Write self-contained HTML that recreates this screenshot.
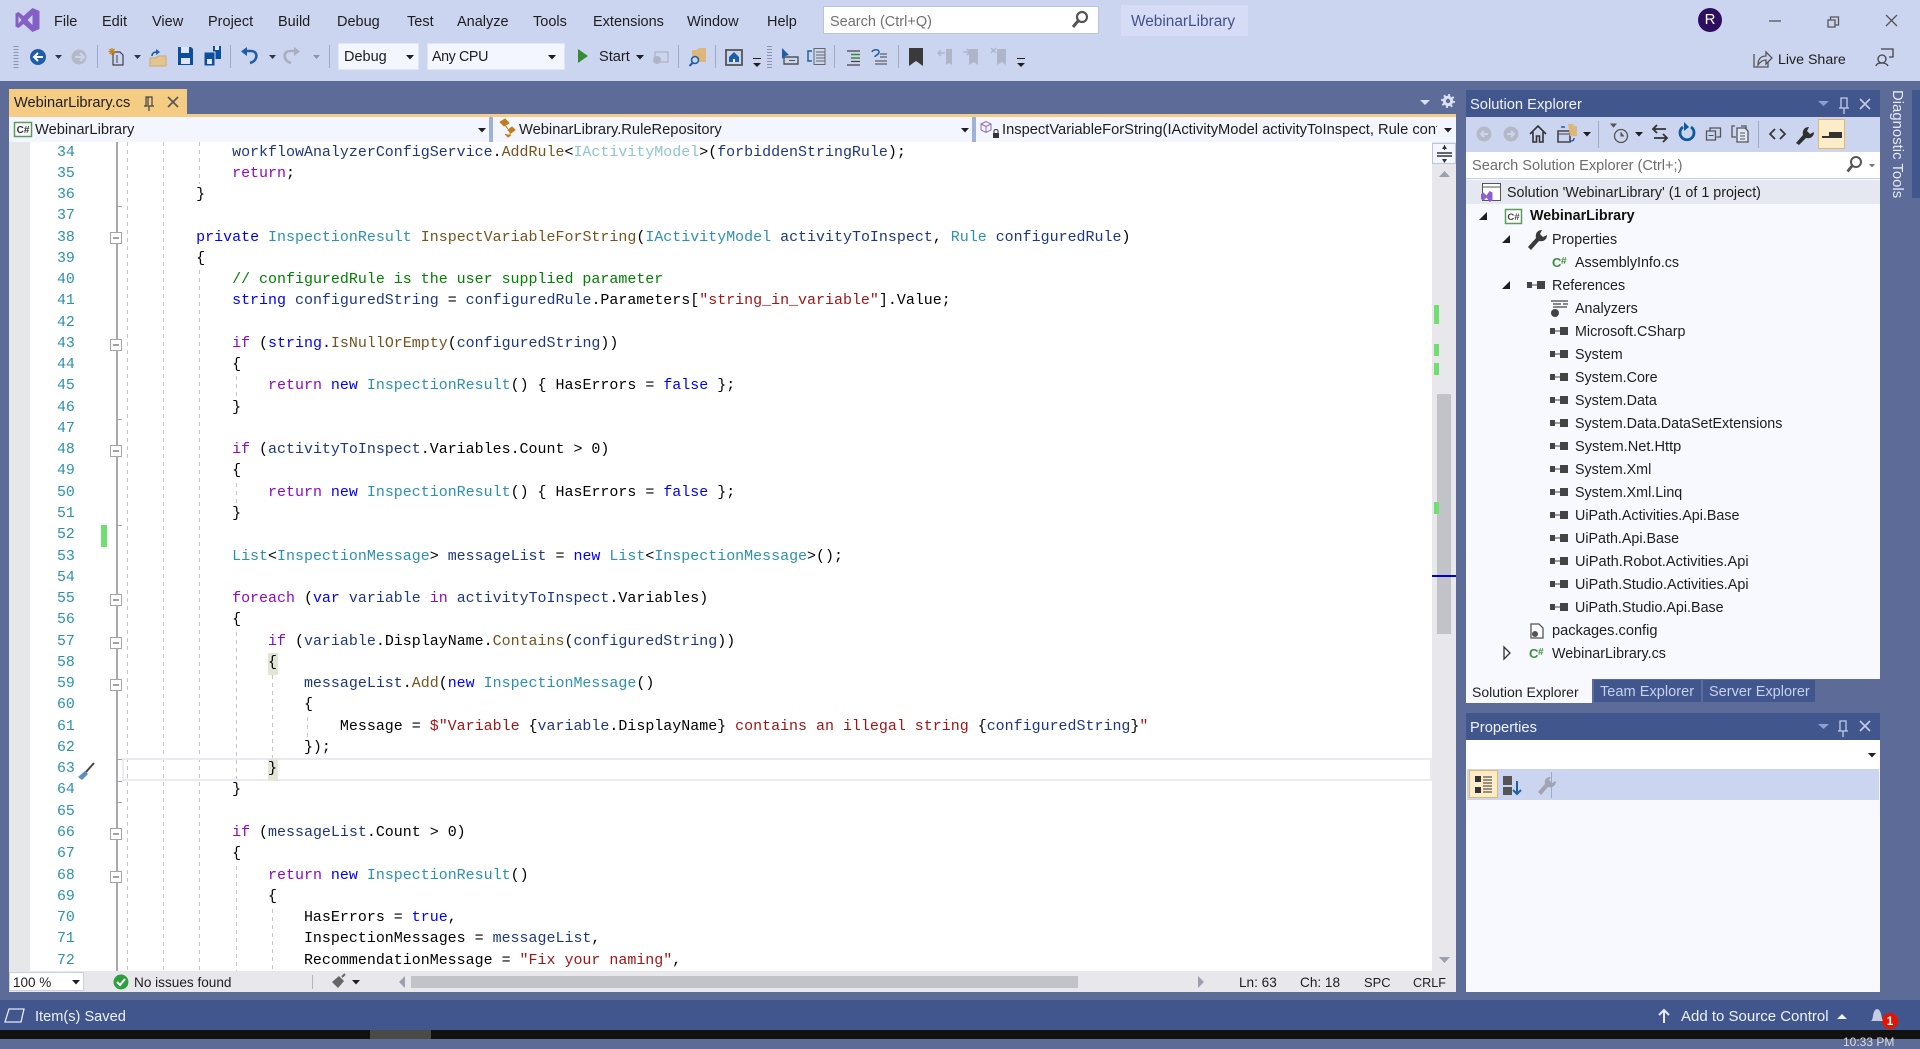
<!DOCTYPE html>
<html><head><meta charset="utf-8"><title>WebinarLibrary</title>
<style>
*{box-sizing:border-box}
html,body{margin:0;padding:0;width:1920px;height:1039px;overflow:hidden;background:#5d6b99;font-family:"Liberation Sans",sans-serif}
.b{position:absolute}
.t{position:absolute;white-space:nowrap;font-size:14.3px;line-height:20px;color:#1e1e1e;margin-top:1px}
.m{font-size:14.5px;top:11px}
#code{position:absolute;left:124.300px;top:142.500px;font:14.97px/21.27px "Liberation Mono",monospace;color:#000;white-space:pre}
#nums{position:absolute;left:57px;top:142.500px;font:14.88px/21.27px "Liberation Mono",monospace;color:#2b91af;white-space:pre}
#code div,#nums div{height:21.27px}
.g{position:absolute;width:1px;background:repeating-linear-gradient(to bottom,#c6c6c6 0,#c6c6c6 4px,transparent 4px,transparent 8px)}
.k{color:#0000ff}.c{color:#8f08c4}.y{color:#2b91af}.l{color:#1f377f}.f{color:#74531f}.s{color:#a31515}.o{color:#008000}.q{color:#8fc3d6}
.h{background:#e2e6d6}
</style></head><body>

<!-- title + toolbar -->
<div class="b" style="left:0;top:0;width:1920px;height:81px;background:#ccd5f0"></div>
<div class="t m" style="left:54px">File</div>
<div class="t m" style="left:102px">Edit</div>
<div class="t m" style="left:152px">View</div>
<div class="t m" style="left:208px">Project</div>
<div class="t m" style="left:278px">Build</div>
<div class="t m" style="left:337px">Debug</div>
<div class="t m" style="left:407px">Test</div>
<div class="t m" style="left:457px">Analyze</div>
<div class="t m" style="left:533px">Tools</div>
<div class="t m" style="left:593px">Extensions</div>
<div class="t m" style="left:687px">Window</div>
<div class="t m" style="left:767px">Help</div>
<div class="b" style="left:823px;top:6px;width:276px;height:28px;background:#fff;border:1px solid #b9c3dd"></div>
<div class="t m" style="left:830px;color:#717171">Search (Ctrl+Q)</div>
<div class="b" style="left:1121px;top:5px;width:127px;height:31px;background:#d6dcf6"></div>
<div class="t" style="left:1131px;top:11px;color:#44528c;font-size:15.4px">WebinarLibrary</div>

<div class="b" style="left:338px;top:43px;width:81px;height:27px;background:#f3f6fe;border:1px solid #dfe6f8"></div>
<div class="t" style="left:344px;top:46px;font-size:14.5px">Debug</div>
<div class="b" style="left:427px;top:43px;width:138px;height:27px;background:#f3f6fe;border:1px solid #dfe6f8"></div>
<div class="t" style="left:432px;top:46px;letter-spacing:-.4px">Any CPU</div>
<div class="t" style="left:599px;top:46px;font-size:14.6px">Start</div>
<div class="t" style="left:1778px;top:49px;font-size:14.2px">Live Share</div>
<div class="b" style="left:1698px;top:8px;width:24px;height:24px;border-radius:50%;background:#2e0f5f"></div>
<div class="t" style="left:1698px;top:9px;width:24px;text-align:center;color:#fff;font-size:15px">R</div>

<!-- document well -->
<div class="b" style="left:9px;top:89px;width:178px;height:26px;background:#f5cc84"></div>
<div class="t" style="left:14px;top:92px;font-size:14.6px">WebinarLibrary.cs</div>
<div class="b" style="left:9px;top:114px;width:1447px;height:3px;background:#f5cc84"></div>

<!-- nav bar -->
<div class="b" style="left:9px;top:117px;width:1447px;height:25px;background:#f3f6fe"></div>
<div class="b" style="left:489px;top:117px;width:4px;height:25px;background:#9fb1d6"></div>
<div class="b" style="left:972px;top:117px;width:4px;height:25px;background:#9fb1d6"></div>
<div class="t" style="left:35px;top:119px;font-size:14.7px">WebinarLibrary</div>
<div class="t" style="left:519px;top:119px;font-size:14.7px">WebinarLibrary.RuleRepository</div>
<div class="b" style="left:1002px;top:117px;width:435px;height:25px;overflow:hidden"><div class="t" style="left:0;top:2px;font-size:14.7px">InspectVariableForString(IActivityModel activityToInspect, Rule configuredRule)</div></div>

<!-- editor -->
<div class="b" style="left:9px;top:142px;width:1447px;height:830px;background:#fff;overflow:hidden"></div>
<div class="b" style="left:9px;top:142px;width:21px;height:830px;background:#e6e7e8"></div>
<div class="b" style="left:101px;top:525px;width:6px;height:22px;background:#6fe06f"></div>
<div class="b" style="left:115.500px;top:142px;width:2px;height:830px;background:#a9a9a9"></div>

<div class="g" style="left:127px;top:142px;height:830px"></div>
<div class="g" style="left:163px;top:142px;height:830px"></div>
<div class="g" style="left:199px;top:142px;height:42px"></div>
<div class="g" style="left:199px;top:270px;height:702px"></div>
<div class="g" style="left:236px;top:376px;height:21px"></div>
<div class="g" style="left:236px;top:483px;height:21px"></div>
<div class="g" style="left:236px;top:632px;height:149px"></div>
<div class="g" style="left:236px;top:866px;height:106px"></div>
<div class="g" style="left:272px;top:675px;height:85px"></div>
<div class="g" style="left:272px;top:909px;height:63px"></div>
<div class="g" style="left:307px;top:717px;height:21px"></div>

<div class="b" style="left:122px;top:758px;width:1310px;height:23px;border:2px solid #eaeaf2"></div>
<div class="b h" style="left:268px;top:653px;width:9.500px;height:22px"></div>
<div class="b h" style="left:268px;top:759px;width:9.500px;height:22px"></div>

<div id="nums"><div>34</div><div>35</div><div>36</div><div>37</div><div>38</div><div>39</div><div>40</div><div>41</div><div>42</div><div>43</div><div>44</div><div>45</div><div>46</div><div>47</div><div>48</div><div>49</div><div>50</div><div>51</div><div>52</div><div>53</div><div>54</div><div>55</div><div>56</div><div>57</div><div>58</div><div>59</div><div>60</div><div>61</div><div>62</div><div>63</div><div>64</div><div>65</div><div>66</div><div>67</div><div>68</div><div>69</div><div>70</div><div>71</div><div>72</div></div>

<div id="code"><div>            <span class="l">workflowAnalyzerConfigService</span>.<span class="f">AddRule</span>&lt;<span class="q">IActivityModel</span>&gt;(<span class="l">forbiddenStringRule</span>);</div><div>            <span class="c">return</span>;</div><div>        }</div><div> </div><div>        <span class="k">private</span> <span class="y">InspectionResult</span> <span class="f">InspectVariableForString</span>(<span class="y">IActivityModel</span> <span class="l">activityToInspect</span>, <span class="y">Rule</span> <span class="l">configuredRule</span>)</div><div>        {</div><div>            <span class="o">// configuredRule is the user supplied parameter</span></div><div>            <span class="k">string</span> <span class="l">configuredString</span> = <span class="l">configuredRule</span>.Parameters[<span class="s">"string_in_variable"</span>].Value;</div><div> </div><div>            <span class="c">if</span> (<span class="k">string</span>.<span class="f">IsNullOrEmpty</span>(<span class="l">configuredString</span>))</div><div>            {</div><div>                <span class="c">return</span> <span class="k">new</span> <span class="y">InspectionResult</span>() { HasErrors = <span class="k">false</span> };</div><div>            }</div><div> </div><div>            <span class="c">if</span> (<span class="l">activityToInspect</span>.Variables.Count &gt; 0)</div><div>            {</div><div>                <span class="c">return</span> <span class="k">new</span> <span class="y">InspectionResult</span>() { HasErrors = <span class="k">false</span> };</div><div>            }</div><div> </div><div>            <span class="y">List</span>&lt;<span class="y">InspectionMessage</span>&gt; <span class="l">messageList</span> = <span class="k">new</span> <span class="y">List</span>&lt;<span class="y">InspectionMessage</span>&gt;();</div><div> </div><div>            <span class="c">foreach</span> (<span class="k">var</span> <span class="l">variable</span> <span class="c">in</span> <span class="l">activityToInspect</span>.Variables)</div><div>            {</div><div>                <span class="c">if</span> (<span class="l">variable</span>.DisplayName.<span class="f">Contains</span>(<span class="l">configuredString</span>))</div><div>                {</div><div>                    <span class="l">messageList</span>.<span class="f">Add</span>(<span class="k">new</span> <span class="y">InspectionMessage</span>()</div><div>                    {</div><div>                        Message = <span class="s">$"Variable </span>{<span class="l">variable</span>.DisplayName}<span class="s"> contains an illegal string </span>{<span class="l">configuredString</span>}<span class="s">"</span></div><div>                    });</div><div>                }</div><div>            }</div><div> </div><div>            <span class="c">if</span> (<span class="l">messageList</span>.Count &gt; 0)</div><div>            {</div><div>                <span class="c">return</span> <span class="k">new</span> <span class="y">InspectionResult</span>()</div><div>                {</div><div>                    HasErrors = <span class="k">true</span>,</div><div>                    InspectionMessages = <span class="l">messageList</span>,</div><div>                    RecommendationMessage = <span class="s">"Fix your naming"</span>,</div></div>

<!-- v-scrollbar -->
<div class="b" style="left:1432px;top:142px;width:24px;height:830px;background:#e8e8ec"></div>
<div class="b" style="left:1432px;top:143px;width:24px;height:21px;background:#f3f6fe;border:1px solid #b9c6e2"></div>
<div class="b" style="left:1437px;top:394px;width:14px;height:240px;background:#c2c3c9"></div>
<div class="b" style="left:1434px;top:305px;width:5px;height:19px;background:#6fe06f"></div>
<div class="b" style="left:1434px;top:344px;width:5px;height:12px;background:#6fe06f"></div>
<div class="b" style="left:1434px;top:363px;width:5px;height:12px;background:#6fe06f"></div>
<div class="b" style="left:1434px;top:502px;width:5px;height:12px;background:#6fe06f"></div>
<div class="b" style="left:1432px;top:575px;width:24px;height:2px;background:#0000cd"></div>

<!-- editor status -->
<div class="b" style="left:9px;top:971px;width:1447px;height:21px;background:#e8e8ec"></div>
<div class="b" style="left:9px;top:972px;width:75px;height:19px;background:#fff;border:1px solid #c6d0ea"></div>
<div class="t" style="left:13px;top:972px;font-size:13.5px">100 %</div>
<div class="t" style="left:134px;top:972px;font-size:13.6px">No issues found</div>
<div class="b" style="left:312px;top:975px;width:1px;height:14px;background:#b4b4bc"></div>
<div class="b" style="left:411px;top:976px;width:667px;height:12px;background:#c2c3c9"></div>
<div class="t" style="left:1239px;top:972px;font-size:13.6px">Ln: 63</div>
<div class="t" style="left:1300px;top:972px;font-size:13.6px">Ch: 18</div>
<div class="t" style="left:1364px;top:972px;font-size:12.9px">SPC</div>
<div class="t" style="left:1413px;top:972px;font-size:12.6px">CRLF</div>

<!-- solution explorer -->
<div class="b" style="left:1466px;top:90px;width:414px;height:27px;background:#40568d"></div>
<div class="t" style="left:1470px;top:94px;color:#f0f3fb;font-size:14.7px">Solution Explorer</div>
<div class="b" style="left:1466px;top:117px;width:414px;height:35px;background:#ccd5f0"></div>
<div class="b" style="left:1466px;top:152px;width:414px;height:27px;background:#fff;border-bottom:1px solid #c6d0ea"></div>
<div class="t" style="left:1472px;top:155px;color:#6d6d6d;font-size:14.6px">Search Solution Explorer (Ctrl+;)</div>
<div class="b" style="left:1466px;top:179px;width:414px;height:500px;background:#f8f9fe"></div>
<div class="b" style="left:1466px;top:180px;width:414px;height:24px;background:#e6e8f1"></div>
<div class="t" style="left:1507px;top:182px">Solution 'WebinarLibrary' (1 of 1 project)</div>
<div class="t" style="left:1530px;top:205px;font-weight:bold;color:#111">WebinarLibrary</div>
<div class="t" style="left:1552px;top:229px">Properties</div>
<div class="t" style="left:1575px;top:252px">AssemblyInfo.cs</div>
<div class="t" style="left:1552px;top:275px">References</div>
<div class="t" style="left:1575px;top:298px">Analyzers</div>
<div class="t" style="left:1575px;top:321px">Microsoft.CSharp</div>
<div class="t" style="left:1575px;top:344px">System</div>
<div class="t" style="left:1575px;top:367px">System.Core</div>
<div class="t" style="left:1575px;top:390px">System.Data</div>
<div class="t" style="left:1575px;top:413px">System.Data.DataSetExtensions</div>
<div class="t" style="left:1575px;top:436px;font-size:14.6px">System.Net.Http</div>
<div class="t" style="left:1575px;top:459px">System.Xml</div>
<div class="t" style="left:1575px;top:482px">System.Xml.Linq</div>
<div class="t" style="left:1575px;top:505px">UiPath.Activities.Api.Base</div>
<div class="t" style="left:1575px;top:528px">UiPath.Api.Base</div>
<div class="t" style="left:1575px;top:551px;font-size:14.6px">UiPath.Robot.Activities.Api</div>
<div class="t" style="left:1575px;top:574px;font-size:14.4px">UiPath.Studio.Activities.Api</div>
<div class="t" style="left:1575px;top:597px">UiPath.Studio.Api.Base</div>
<div class="t" style="left:1552px;top:620px;font-size:14.6px">packages.config</div>
<div class="t" style="left:1552px;top:643px">WebinarLibrary.cs</div>

<div class="b" style="left:1466px;top:679px;width:126px;height:24px;background:#f8f9fe"></div>
<div class="t" style="left:1472px;top:681px;font-size:14px">Solution Explorer</div>
<div class="b" style="left:1594px;top:680px;width:107px;height:22px;background:#40568d"></div>
<div class="t" style="left:1600px;top:681px;font-size:14.6px;color:#c7d1ee">Team Explorer</div>
<div class="b" style="left:1703px;top:680px;width:112px;height:22px;background:#40568d"></div>
<div class="t" style="left:1709px;top:681px;font-size:14.5px;color:#c7d1ee">Server Explorer</div>

<!-- properties -->
<div class="b" style="left:1466px;top:713px;width:414px;height:27px;background:#40568d"></div>
<div class="t" style="left:1470px;top:717px;color:#f0f3fb;font-size:14.7px">Properties</div>
<div class="b" style="left:1466px;top:740px;width:414px;height:252px;background:#f8f9fe"></div>
<div class="b" style="left:1466px;top:740px;width:414px;height:29px;background:#fff"></div>
<div class="b" style="left:1467px;top:769px;width:412px;height:31px;background:#ccd5f0"></div>

<!-- diagnostic -->
<div class="t" style="left:1887px;top:89px;font-size:14.9px;color:#e4e9f7;writing-mode:vertical-rl;width:20px;line-height:20px">Diagnostic Tools</div>
<div class="b" style="left:1912px;top:90px;width:8px;height:108px;background:#40568d"></div>

<!-- status bar -->
<div class="b" style="left:0;top:1000px;width:1920px;height:30px;background:#40568d"></div>
<div class="t" style="left:35px;top:1006px;color:#eef1fa;font-size:14.6px">Item(s) Saved</div>
<div class="t" style="left:1681px;top:1006px;color:#eef1fa;font-size:15px">Add to Source Control</div>
<div class="b" style="left:0;top:1030px;width:1920px;height:9px;background:#11110f"></div>
<div class="b" style="left:370px;top:1030px;width:61px;height:9px;background:#4a4a47"></div>
<div class="t" style="left:1843px;top:1035px;color:#ddd;font-size:12px;line-height:12px">10:33 PM</div>
<div class="b" style="left:1882px;top:1013px;width:16px;height:16px;border-radius:50%;background:#e51400"></div>
<div class="t" style="left:1882px;top:1010px;width:16px;text-align:center;font-size:12px;font-weight:bold;color:#fff">1</div>

<svg class="b" style="left:0;top:0" width="1920" height="1039" viewBox="0 0 1920 1039">
<!-- VS logo -->
<path fill="#865fc5" fill-rule="evenodd" d="M32.500 8l7 3v18l-7 3-9-8-5 4-3-1.500v-13l3-1.500 5 4zM32.500 15l-5 5 5 5zM18.500 16.500v7l3-3.500z"/>
<!-- grip -->
<path stroke="#8a94b0" stroke-width="5" stroke-dasharray="1 2" fill="none" d="M16 46v22"/>
<path stroke="#8a94b0" stroke-width="5" stroke-dasharray="1 2" fill="none" d="M769.500 46v22"/>
<!-- back/forward -->
<circle cx="38" cy="57" r="8" fill="#1e5ea8"/><path d="M43 57h-8m3-4l-4 4 4 4" stroke="#fff" stroke-width="2" fill="none"/>
<path d="M55 55h7l-3.500 4zM134 55h7l-3.500 4zM269 55h7l-3.500 4z" fill="#2a3350"/>
<circle cx="79" cy="57" r="7.500" fill="#b5b9c6"/><path d="M75 57h8m-3-4l4 4-4 4" stroke="#ccd5f0" stroke-width="2" fill="none"/>
<path d="M313 55h7l-3.500 4z" fill="#8d93a8"/>
<!-- separators -->
<path stroke="#9eaac8" d="M97.500 45v23M230.500 45v23M329.500 45v23M678.500 45v23M715.500 45v23M834.500 45v23M898.500 45v23M1598.500 121v27M1758.500 121v27M1551.500 772v26"/>
<!-- new project -->
<path d="M113 52h7l3 3v10h-10z" fill="none" stroke="#444" stroke-width="1.200"/><path d="M117 55v8" stroke="#444"/><path d="M112 48v7M108.500 51.500h7M109.500 49l5 5M114.500 49l-5 5" stroke="#c7851b" stroke-width="1.300"/>
<!-- open -->
<path d="M150 58h6l2-2h8v10h-16z" fill="#e3c590" stroke="#d0a868"/><path d="M152 56c0-3 2-4 5-4" stroke="#1e5ea8" stroke-width="1.600" fill="none"/><path d="M156 49l4 3-4 3z" fill="#1e5ea8"/>
<!-- save -->
<path d="M178 47h13l2 2v16h-15z" fill="#0c4e9e"/><rect x="181" y="47" width="8" height="6" fill="#dfe6f8"/><rect x="181" y="58" width="9" height="6" fill="#dfe6f8"/>
<path d="M213 46h8v13h-8z" fill="#0c4e9e"/><rect x="215" y="46" width="4" height="4" fill="#dfe6f8"/><path d="M204 52h11v14h-11z" fill="#0c4e9e" stroke="#ccd5f0"/><rect x="207" y="59" width="5" height="5" fill="#dfe6f8"/>
<!-- undo/redo -->
<path d="M244 51h7c5 0 6 4 5 7s-3 4-6 5" stroke="#1e5ea8" stroke-width="2.600" fill="none"/><path d="M247 47v9l-6-4.500z" fill="#1e5ea8"/>
<path d="M297 51h-7c-5 0-6 4-5 7s3 4 6 5" stroke="#a9aebd" stroke-width="2.600" fill="none"/><path d="M294 47v9l6-4.500z" fill="#a9aebd"/>
<!-- dropdown arrows -->
<path d="M406 55h8l-4 4.500zM548 55h8l-4 4.500zM636 55h8l-4 4.500z" fill="#1e1e1e"/>
<!-- play -->
<path d="M578 49l10 7-10 7z" fill="#388a34"/>
<path d="M655 52h13v10h-13z" fill="none" stroke="#b0b5c4" stroke-width="1.300"/><circle cx="657" cy="60" r="4" fill="#b0b5c4"/>
<!-- folder search -->
<path d="M692 50h5l2-2h7v14h-14z" fill="#dcb67a"/><circle cx="695" cy="60" r="3.500" fill="#ccd5f0" stroke="#1e5ea8" stroke-width="1.600"/><path d="M692.500 63l-3 3" stroke="#1e5ea8" stroke-width="2"/>
<!-- home box -->
<rect x="726" y="50" width="16" height="15" fill="#ccd5f0" stroke="#555" stroke-width="1.800"/><path d="M734 52l5 5v5h-10v-5z" fill="#1e5ea8"/><rect x="733" y="59" width="2" height="3" fill="#fff"/>
<path d="M753 58.500h8" stroke="#1e1e1e"/><path d="M753 63h8l-4 4z" fill="#1e1e1e"/>
<path d="M1017 58.500h8" stroke="#1e1e1e"/><path d="M1017 63h8l-4 4z" fill="#1e1e1e"/>
<!-- step icons -->
<path d="M782 48l0 11 3-3 4-1z" fill="#1e5ea8"/><path d="M784 57h14v7h-14z" fill="none" stroke="#555" stroke-width="1.400"/><path d="M789 60.500h6" stroke="#555"/>
<path d="M812 51h-4v10h4" fill="none" stroke="#1e5ea8" stroke-width="1.500"/><path d="M814 48.500h11v16h-11z" fill="none" stroke="#666"/><path d="M816 52h9M816 55h9M816 58h9M816 61h9" stroke="#666"/>
<path d="M847 51h13M851 54.500h9M851 58h9M851 61.500h9M847 65h13" stroke="#444" stroke-width="1.200"/><path d="M851 54.500h9M851 58h9" stroke="#388a34" stroke-width="1.200"/>
<path d="M872 52c1-3 7-3 7 0s-4 3-4 5" fill="none" stroke="#1e5ea8" stroke-width="1.600"/><path d="M880 54h7M880 57h7M875 61h12M875 64h12" stroke="#444"/>
<!-- bookmarks -->
<path d="M909 48h14v18l-7-5-7 5z" fill="#3a3a3a"/>
<path d="M946 49h6v16l-3-2-3 2z" fill="#aeb5c9"/><path d="M945 53h-7m3-3l-3 3 3 3" stroke="#aeb5c9" stroke-width="1.500" fill="none"/>
<path d="M969 49h9v16l-4-3-5 3z" fill="#aeb5c9"/><path d="M963 52h7m-3-3l3 3-3 3" stroke="#aeb5c9" stroke-width="1.500" fill="none"/>
<path d="M997 49h9v16l-4-3-5 3z" fill="#aeb5c9"/><path d="M991 48l5 5m0-5l-5 5" stroke="#aeb5c9" stroke-width="1.500"/>
<!-- search mag -->
<circle cx="1082" cy="17" r="5" fill="none" stroke="#555" stroke-width="2.200"/><path d="M1078 21l-5 6" stroke="#555" stroke-width="3"/>
<!-- window controls -->
<path d="M1769 21h12" stroke="#555" stroke-width="1.300"/>
<path d="M1828 23h7v7h-7zM1830.500 23v-3h8v8h-3" fill="none" stroke="#555" stroke-width="1.300" transform="translate(0 -3)"/>
<path d="M1886 15l11 11m0-11l-11 11" stroke="#555" stroke-width="1.300"/>
<!-- live share -->
<path d="M1754 54v13h14v-5" fill="none" stroke="#555" stroke-width="1.300"/><path d="M1758 65c0-6 3-9 8-9v-4l6 6-6 6v-4c-3 0-6 2-8 5z" fill="none" stroke="#555" stroke-width="1.300"/>
<!-- feedback -->
<circle cx="1882" cy="59" r="4" fill="none" stroke="#444" stroke-width="1.300"/><path d="M1876 66c1-3 3-3 6-3s5 1 6 3M1881 49h12v8h-4" fill="none" stroke="#444" stroke-width="1.300"/>
<!-- tab pin / close -->
<path d="M146 97h6v9h-6zM144 106h10M149 106v5M148 97v8" stroke="#444" stroke-width="1.200" fill="none"/>
<path d="M168 97l10 10m0-10l-10 10" stroke="#555" stroke-width="1.600"/>
<!-- well right -->
<path d="M1420 100h10l-5 5z" fill="#dbe2f5"/>
<circle cx="1448" cy="101" r="3.700" fill="none" stroke="#dbe2f5" stroke-width="3"/><circle cx="1448" cy="101" r="6" fill="none" stroke="#dbe2f5" stroke-width="2" stroke-dasharray="2 2.700"/>
<!-- nav icons -->
<rect x="14.500" y="122.500" width="17" height="14" fill="#fff" stroke="#5a9a5a" stroke-width="1.500"/>
<text x="23" y="133" font-family="Liberation Sans" font-size="10" font-weight="bold" text-anchor="middle" fill="#333">C#</text>
<path d="M500 122l5-3 4 4-5 3zM508 130l4-3 3 3-4 3zM505 134l3 3 3-2" fill="#c27d1a" stroke="#c27d1a"/><path d="M505 125l3 4M510 130v6" stroke="#c27d1a"/>
<path d="M478 128h8l-4 4.500zM961 128h8l-4 4.500zM1444 128h8l-4 4.500z" fill="#1e1e1e"/>
<path d="M981 124l5-2.500 5 2.500v6l-5 2.500-5-2.500zM981 124l5 2.500 5-2.500M986 126.500v6" fill="none" stroke="#8f6ab8"/>
<rect x="993" y="133" width="6" height="5" fill="#333"/><path d="M994 133v-2c0-2 4-2 4 0v2" fill="none" stroke="#333"/>
<!-- split -->
<path d="M1437 153h15" stroke="#333" stroke-width="1.500"/><path d="M1437 156h15" stroke="#333" stroke-width="1.500"/><path d="M1444.500 145v5M1444.500 160v-1" stroke="#333"/><path d="M1442 149l2.500-4 2.500 4zM1442 159l2.500 4 2.500-4z" fill="#333"/>
<path d="M1439 177l5.500-6 5.500 6z" fill="#9c9fae"/>
<path d="M1439 957l5.500 6 5.500-6z" fill="#9c9fae"/>
<!-- collapse boxes -->
<g fill="#fff" stroke="#a5a5a5"><rect x="110.500" y="232.500" width="11" height="11"/><rect x="110.500" y="339.500" width="11" height="11"/><rect x="110.500" y="445.500" width="11" height="11"/><rect x="110.500" y="594.500" width="11" height="11"/><rect x="110.500" y="637.500" width="11" height="11"/><rect x="110.500" y="679.500" width="11" height="11"/><rect x="110.500" y="828.500" width="11" height="11"/><rect x="110.500" y="871.500" width="11" height="11"/></g>
<path stroke="#444" d="M113 238h6M113 345h6M113 451h6M113 600h6M113 643h6M113 685h6M113 834h6M113 877h6"/>
<path stroke="#a5a5a5" d="M116 206.500h6M116 419.500h6M116 525.500h6M116 759.500h6M116 781.500h6M116 802.500h6"/>
<!-- screwdriver -->
<path d="M78 777l7-6 3 3-6 6z" fill="#5b90c7"/><path d="M86 772l8-9" stroke="#444" stroke-width="2"/>
<!-- status: check, brush, arrows -->
<circle cx="121" cy="982" r="7.500" fill="#2f9e3f"/><path d="M117 982l3 3 5-6" stroke="#fff" stroke-width="2" fill="none"/>
<path d="M332 982l7-6 5 5-6 7z" fill="#666"/><path d="M342 977l3-3" stroke="#666" stroke-width="2"/>
<path d="M352 980h8l-4 4.500z" fill="#1e1e1e"/>
<path d="M72 980h8l-4 4.500z" fill="#1e1e1e"/>
<path d="M405 976v12l-6-6z" fill="#9c9fae"/><path d="M1198 976v12l6-6z" fill="#9c9fae"/>
<!-- Item saved -->
<path d="M9 1012h15l-3 13H5z" fill="none" stroke="#e6eaf6" stroke-width="1.300" transform="translate(0 -3)"/>
<!-- source control -->
<path d="M1664 1023v-13m-5 5l5-5 5 5" stroke="#e6eaf6" stroke-width="2" fill="none"/>
<path d="M1837 1019l5-5 5 5z" fill="#eef1fa"/>
<path d="M1871 1021c3-2 1-11 6-12 5 1 4 9 6 12z" fill="#c6cde2"/>
<!-- SE header icons -->
<path d="M1818 101h11l-5.500 5z" fill="#8ea0cd"/><path d="M1841 98h6v10h-6zM1839 108h10M1844 108v6" stroke="#c3cde6" stroke-width="1.300" fill="none"/><path d="M1860 99l10 10m0-10l-10 10" stroke="#c3cde6" stroke-width="1.600"/>
<path d="M1818 724h11l-5.500 5z" fill="#8ea0cd"/><path d="M1840 721h6v10h-6zM1838 731h10M1843 731v6" stroke="#c3cde6" stroke-width="1.300" fill="none"/><path d="M1860 721l10 10m0-10l-10 10" stroke="#c3cde6" stroke-width="1.600"/>
<!-- SE toolbar -->
<circle cx="1484" cy="134" r="7.500" fill="#b5b9c6"/><path d="M1488 134h-7m3-3l-3 3 3 3" stroke="#ccd5f0" stroke-width="2" fill="none"/>
<circle cx="1511" cy="134" r="7.500" fill="#b5b9c6"/><path d="M1507 134h7m-3-3l3 3-3 3" stroke="#ccd5f0" stroke-width="2" fill="none"/>
<path d="M1530 134l8-8 8 8M1533 132v10h3.500v-6h3v6h3.500v-10" stroke="#333" stroke-width="1.600" fill="none"/>
<path d="M1558 131h12v11h-12z" fill="none" stroke="#444" stroke-width="1.600"/><path d="M1558 134h12" stroke="#444"/><path d="M1568 124h5l1 2h3v10h-7z" fill="#dcb67a"/><path d="M1561 127h4" stroke="#1e5ea8" stroke-width="1.500"/><path d="M1574 138c0 3-2 3-4 3" stroke="#1e5ea8" stroke-width="1.500" fill="none"/>
<path d="M1583 132h8l-4 4.500zM1635 132h8l-4 4.500z" fill="#1e1e1e"/>
<circle cx="1621" cy="136" r="6.500" fill="none" stroke="#555" stroke-width="1.300"/><path d="M1621 132v4h3M1611 124h5l-2.500 3z" stroke="#555" fill="#555"/>
<path d="M1653 129h13m-9-4l-4 4 4 4M1667 138h-13m9-4l4 4-4 4" stroke="#333" stroke-width="1.800" fill="none"/>
<path d="M1691 127a7 7 0 1 1-8 0" stroke="#0e5a9e" stroke-width="2.800" fill="none"/><path d="M1684 122v9l5-4z" fill="#0e5a9e"/>
<path d="M1706.500 131h9v9h-9z" fill="none" stroke="#555" stroke-width="1.300"/><path d="M1710 131v-3h10.500v9h-4" fill="none" stroke="#555" stroke-width="1.300"/><path d="M1708.500 135.500h5" stroke="#1e5ea8"/>
<path d="M1735 126h-3v11h4M1746 129v-3h-5" fill="none" stroke="#555" stroke-width="1.300"/><path d="M1737 128h8l3 3v11h-11z" fill="#dfe6f8" stroke="#555" stroke-width="1.300"/><path d="M1740 133h5M1740 136h5M1740 139h5" stroke="#555"/>
<path d="M1775 129l-5 5 5 5M1780 129l5 5-5 5" stroke="#333" stroke-width="1.700" fill="none"/>
<path d="M1796 143l7-8c-1-4 1-8 6-8l-2 4 3 3 4-2c0 5-4 7-8 6l-7 7z" fill="#2f2f2f"/>
<rect x="1818.500" y="119.500" width="26" height="29" fill="#fcecc9" stroke="#e5b867"/>
<path d="M1822 137h20" stroke="#333" stroke-width="2"/><rect x="1829" y="132" width="13" height="5" fill="#333"/>
<!-- SE search mag -->
<circle cx="1856" cy="162" r="5" fill="none" stroke="#555" stroke-width="2"/><path d="M1852 166l-4.500 5.500" stroke="#555" stroke-width="2.800"/><path d="M1869 164h6l-3 3.500z" fill="#777"/>
<!-- tree icons -->
<rect x="1482.500" y="183.500" width="18" height="17" fill="#fff" stroke="#555"/><path d="M1483 187h18" stroke="#555"/>
<path d="M1481 194l2.500-1.500 3 3 3-4.500 3 1.500v8l-3 1.500-3-4.500-3 3-2.500-1.500z" fill="#8e5fd1"/>
<path d="M1487 212v8h-8z" fill="#1e1e1e"/>
<rect x="1505.500" y="209.500" width="16" height="14" fill="#fff" stroke="#5a9a5a" stroke-width="1.500"/>
<text x="1513.500" y="220" font-family="Liberation Sans" font-size="9.500" font-weight="bold" text-anchor="middle" fill="#444">C#</text>
<path d="M1510 235v8h-8zM1510 281v8h-8z" fill="#1e1e1e"/>
<path d="M1528 247l8-9c-1-4 1-8 6-8l-2 4 3 3 4-2c0 5-4 7-8 6l-8 9z" fill="#3a3a3a"/>
<text x="1552" y="267" font-family="Liberation Sans" font-size="13" font-weight="bold" fill="#3d8f3d">C</text><text x="1561" y="264" font-family="Liberation Sans" font-size="10" font-weight="bold" fill="#3d8f3d">#</text>
<g fill="#444"><path d="M1527 282h5v6h-5zM1532 284.500h5v1h-5zM1537 281h8v8h-8z"/></g>
<path d="M1551 301h17M1553 304h8M1563 304h5M1553 307h14" stroke="#444" stroke-width="1.300"/><circle cx="1555" cy="313" r="4" fill="#444"/>
<g fill="#444">
<path d="M1550 328h5v6h-5zM1555 330.500h5v1h-5zM1560 327h8v8h-8z"/>
<path d="M1550 351h5v6h-5zM1555 353.500h5v1h-5zM1560 350h8v8h-8z"/>
<path d="M1550 374h5v6h-5zM1555 376.500h5v1h-5zM1560 373h8v8h-8z"/>
<path d="M1550 397h5v6h-5zM1555 399.500h5v1h-5zM1560 396h8v8h-8z"/>
<path d="M1550 420h5v6h-5zM1555 422.500h5v1h-5zM1560 419h8v8h-8z"/>
<path d="M1550 443h5v6h-5zM1555 445.500h5v1h-5zM1560 442h8v8h-8z"/>
<path d="M1550 466h5v6h-5zM1555 468.500h5v1h-5zM1560 465h8v8h-8z"/>
<path d="M1550 489h5v6h-5zM1555 491.500h5v1h-5zM1560 488h8v8h-8z"/>
<path d="M1550 512h5v6h-5zM1555 514.500h5v1h-5zM1560 511h8v8h-8z"/>
<path d="M1550 535h5v6h-5zM1555 537.500h5v1h-5zM1560 534h8v8h-8z"/>
<path d="M1550 558h5v6h-5zM1555 560.500h5v1h-5zM1560 557h8v8h-8z"/>
<path d="M1550 581h5v6h-5zM1555 583.500h5v1h-5zM1560 580h8v8h-8z"/>
<path d="M1550 604h5v6h-5zM1555 606.500h5v1h-5zM1560 603h8v8h-8z"/>
</g>
<path d="M1531 624h8l4 4v10h-12z" fill="#fff" stroke="#555" stroke-width="1.300"/><circle cx="1535" cy="634" r="3" fill="#555"/>
<path d="M1504 647l6 6-6 6z" fill="none" stroke="#333" stroke-width="1.300"/>
<text x="1529" y="658" font-family="Liberation Sans" font-size="13" font-weight="bold" fill="#3d8f3d">C</text><text x="1538" y="655" font-family="Liberation Sans" font-size="10" font-weight="bold" fill="#3d8f3d">#</text>
<!-- properties toolbar -->
<path d="M1868 753h8l-4 4.500z" fill="#1e1e1e"/>
<rect x="1469.500" y="770.500" width="28" height="27" fill="#fcecc9" stroke="#e5b867"/>
<rect x="1475" y="776" width="6" height="6" fill="#333"/><rect x="1475" y="787" width="6" height="6" fill="#333"/><path d="M1483 777h9M1483 780h9M1483 783h9M1483 786h9M1483 789h9M1483 792h9" stroke="#333"/>
<rect x="1503" y="776" width="9" height="9" fill="#555"/><rect x="1503" y="787" width="9" height="8" fill="#555"/><path d="M1517 781v13m-4-4l4 4 4-4" stroke="#1e5ea8" stroke-width="2" fill="none"/>
<path d="M1538 792l7-8c-1-4 1-7 6-7l-2 3 3 3 4-2c0 5-4 7-8 6l-7 8z" fill="#a1a5af"/>
</svg>
</body></html>
